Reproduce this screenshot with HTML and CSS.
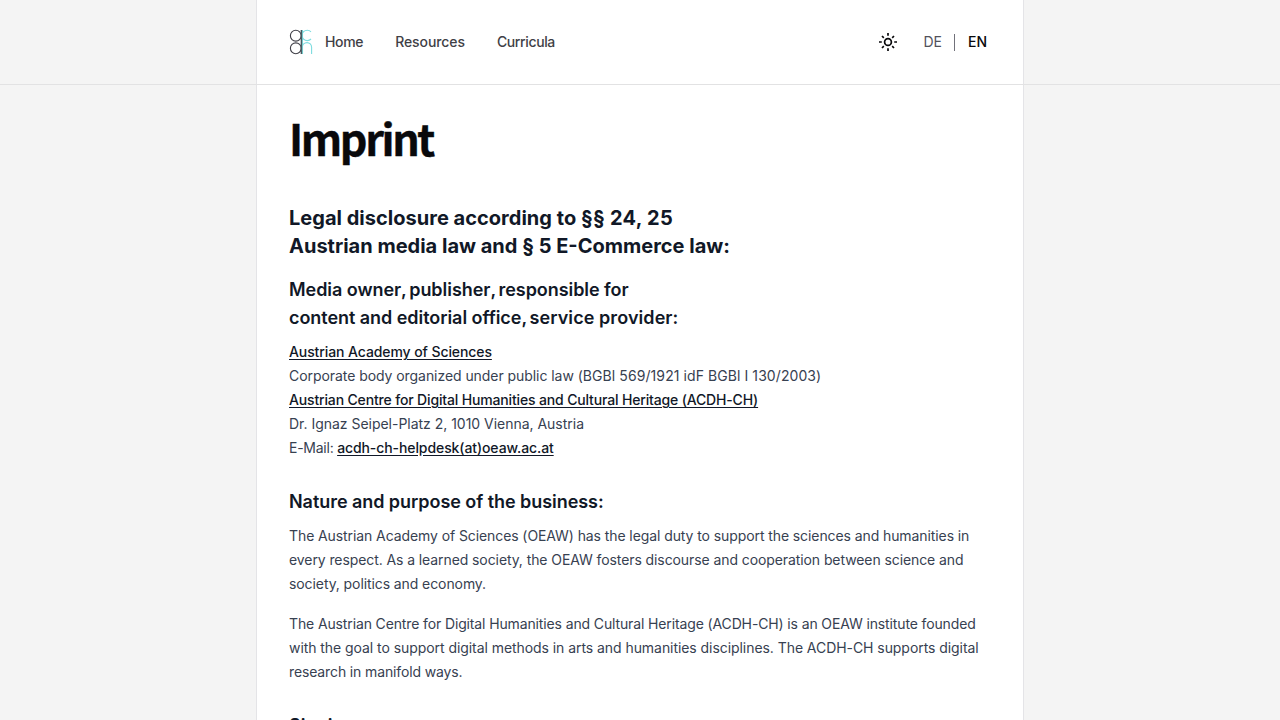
FILE: index.html
```html
<!DOCTYPE html>
<html lang="en">
<head>
<meta charset="utf-8">
<title>Imprint</title>
<link rel="stylesheet" href="styles.css">
</head>
<body>
<header class="site-header">
  <div class="header-inner">
    <a class="logo" href="#" aria-label="Home">
      <svg width="24" height="26" viewBox="0 0 24 26" fill="none">
        <g stroke="#7ddcdf" stroke-width="1.1">
          <path d="M22 2.8A5.2 5.2 0 1 0 22 10M13.5 1v24M13.4 18.2a4.6 4.6 0 0 1 9.2 0V25"/>
        </g>
        <g stroke="#404048" stroke-width="1.1">
          <circle cx="6.8" cy="6.7" r="5.4"/><circle cx="6.8" cy="19.3" r="5.4"/>
        </g>
        <path d="M12.4 1v24" stroke="#4a5a60" stroke-width="1.5"/>
      </svg>
    </a>
    <nav class="nav"><a class="home" href="#">Home</a><a class="resources" href="#">Resources</a><a class="curricula" href="#">Curricula</a></nav>
    <div class="tools">
      <svg class="sun" width="20" height="20" viewBox="0 0 20 20" fill="none" stroke="#09090b" stroke-width="1.7">
        <circle cx="10" cy="10" r="3.4"/>
        <path d="M10 1v2.8M10 16.2V19M1 10h2.8M16.2 10H19M4 4l1.8 1.8M14.2 14.2L16 16M4 16l1.8-1.8M14.2 5.8L16 4"/>
      </svg>
      <div class="langs"><a href="#">DE</a><span class="divider"></span><a class="active" href="#">EN</a></div>
    </div>
  </div>
</header>
<main class="content">
  <h1>Imprint</h1>
  <h2><span class="w1">Legal disclosure according to </span><span class="w25">§§ 24, 25</span><br>Austrian media law and § 5 E-Commerce law:</h2>
  <h3 class="t5">Media owner<span class="comma">, </span>publisher<span class="comma">, </span>responsible for<br>content and editorial office<span class="comma">, </span><span class="w8">service provider:</span></h3>
  <p><a class="t9" href="#">Austrian Academy of Sciences</a><br><span class="t6">Corporate body organized under public law </span><span class="w8">(BGBl 569/1921 idF BGBl I 130/2003)</span><br><a class="t15" href="#">Austrian Centre for Digital Humanities and Cultural Heritage (ACDH-CH)</a><br><span class="t2">Dr. Ignaz Seipel-Platz 2, 1010 Vienna, Austria</span><br><span class="t25">E-Mail: </span><a class="t9" href="#">acdh-ch-helpdesk(at)oeaw.ac.at</a></p>
  <h3 class="section t5">Nature and purpose of the business:</h3>
  <p class="t9">The Austrian Academy of Sciences (OEAW) has the legal duty to support the sciences and humanities in<br>every respect. As a learned society, the OEAW fosters discourse and cooperation between science and<br>society, politics and economy.</p>
  <p><span class="t12">The Austrian Centre for Digital Humanities and Cultural Heritage (ACDH-CH) is an OEAW institute founded</span><br><span class="t6">with the goal to support digital methods in arts and humanities disciplines. The ACDH-CH supports digital</span><br><span class="t12">research in manifold ways.</span></p>
  <h3 class="section">Signing</h3>
</main>
</body>
</html>
```
FILE: styles.css
```css
* { box-sizing: border-box; }
html { height: 100%; overflow: hidden; }
body { margin: 0; height: 100%; overflow: hidden; display: flex; flex-direction: column; background: #f4f4f4; font: 14px/24px Inter, sans-serif; color: #374151; }
a { color: inherit; text-decoration: none; }
.site-header { flex: none; height: 85px; border-bottom: 1px solid #e2e2e3; }
.header-inner { width: 768px; height: 84px; margin: 0 auto; padding: 0 36px 0 32px; display: flex; align-items: center; background: #fff; border: solid #e4e4e7; border-width: 0 1px; }
.logo { display: flex; width: 24px; margin-right: 12px; }
.nav { display: flex; gap: 32px; font-weight: 500; color: #3f3f46; }
.home { letter-spacing: -0.35px; }
.resources { letter-spacing: -0.08px; }
.curricula { letter-spacing: -0.38px; }
.tools { margin-left: auto; display: flex; align-items: center; gap: 25px; }
.sun { display: block; }
.langs { display: flex; align-items: center; color: #52525b; }
.divider { width: 1px; height: 17px; margin: 0 13px 0 12px; background: #71717a; }
.active { color: #09090b; font-weight: 500; }
.content { flex: 1 0 auto; width: 768px; margin: 0 auto; padding: 28px 32px 0; background: #fff; border: solid #e4e4e7; border-width: 0 1px; }
h1 { margin: 0 0 43px; font: 700 43px/48px "Noto Sans CJK SC", sans-serif; letter-spacing: -2.4px; color: #09090b; -webkit-text-stroke: 0.4px #09090b; }
h2 { margin: 0 0 16px; font-size: 20px; line-height: 28px; font-weight: 700; color: #111827; }
h3 { margin: 0 0 8px; font-size: 18px; line-height: 28px; font-weight: 600; color: #111827; }
.section { margin-top: 28px; }
.content p { margin: 0 0 16px; white-space: nowrap; }
.content p a { font-weight: 500; color: #111827; text-decoration: underline; text-underline-offset: 2px; }
.comma { letter-spacing: -0.9px; }
.w1 { letter-spacing: 0.02px; }
.w25 { letter-spacing: 0.27px; }
.w8 { letter-spacing: 0.08px; }
.t2 { letter-spacing: -0.02px; }
.t5 { letter-spacing: -0.05px; }
.t6 { letter-spacing: -0.06px; }
.t9 { letter-spacing: -0.09px; }
.t12 { letter-spacing: -0.13px; }
.t15 { letter-spacing: -0.155px; }
.t25 { letter-spacing: -0.25px; }
```
